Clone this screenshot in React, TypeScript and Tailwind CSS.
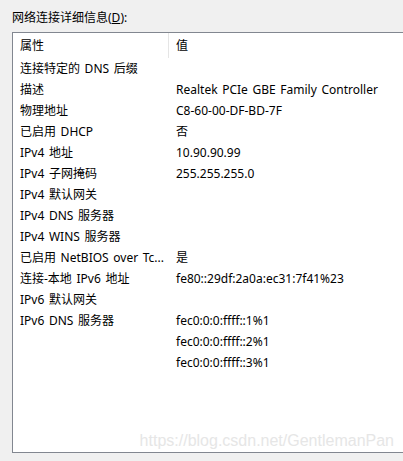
import React from 'react';

const rows: [string, string][] = [
  ['连接特定的 DNS 后缀', ''],
  ['描述', 'Realtek PCIe GBE Family Controller'],
  ['物理地址', 'C8-60-00-DF-BD-7F'],
  ['已启用 DHCP', '否'],
  ['IPv4 地址', '10.90.90.99'],
  ['IPv4 子网掩码', '255.255.255.0'],
  ['IPv4 默认网关', ''],
  ['IPv4 DNS 服务器', ''],
  ['IPv4 WINS 服务器', ''],
  ['已启用 NetBIOS over Tc...', '是'],
  ['连接-本地 IPv6 地址', 'fe80::29df:2a0a:ec31:7f41%23'],
  ['IPv6 默认网关', ''],
  ['IPv6 DNS 服务器', 'fec0:0:0:ffff::1%1'],
  ['', 'fec0:0:0:ffff::2%1'],
  ['', 'fec0:0:0:ffff::3%1'],
];

export default function App() {
  return (
    <div
      className="w-[403px] h-[461px] bg-[#f0f0f0] overflow-hidden text-[12px] text-black [word-spacing:1.5px]"
      style={{ fontFamily: '"Noto Sans", "Noto Sans CJK SC", sans-serif' }}
    >
      <div className="h-[32px] pl-[12px] pt-[9px] leading-[18px]">
        网络连接详细信息(<span className="underline">D</span>):
      </div>
      <div className="ml-[12px] h-[421px] bg-white border-l border-t border-b border-[#828790] relative">
        <div className="flex h-[25px] items-center">
          <div className="w-[156px] pl-[7px] h-full flex items-center border-r border-[#e5e5e5]">属性</div>
          <div className="pl-[7px]">值</div>
        </div>
        {rows.map(([k, v], i) => (
          <div key={i} className="flex h-[21px] items-center leading-[21px]">
            <div className="w-[157px] pl-[7px] whitespace-nowrap overflow-hidden">{k}</div>
            <div className="pl-[6px] whitespace-nowrap">{v}</div>
          </div>
        ))}
        <div
          className="absolute right-[9px] bottom-[1px] text-[16px] text-[#e6e6e6] leading-[20px] [word-spacing:0px]"
          style={{ fontFamily: '"Liberation Sans", Arial, sans-serif' }}
        >
          https://blog.csdn.net/GentlemanPan
        </div>
      </div>
    </div>
  );
}
